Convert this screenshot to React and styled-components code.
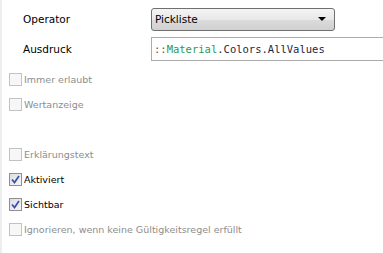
import React from 'react';
import styled, { createGlobalStyle } from 'styled-components';

const Global = createGlobalStyle`
  html, body { margin: 0; padding: 0; background: #fff; }
  body { font-family: "DejaVu Sans", Tahoma, sans-serif; font-size: 9.5px; }
`

const Panel = styled.div`
  width: 383px;
  height: 253px;
  box-sizing: border-box;
  border-left: 2px solid #eeeeee;
  overflow: hidden;
  display: flex;
  flex-direction: column;
  padding-top: 7px;
`

const FieldRow = styled.div`
  display: flex;
  align-items: center;
  height: 24px;
  margin-bottom: ${({gap}) => gap || 0}px;
`

const Label = styled.div`
  width: 128px;
  padding-left: 21px;
  color: #000;
  font-size: 10.5px;
`

const Select = styled.div`
  width: 184px;
  height: 23px;
  box-sizing: border-box;
  border: 1px solid #707070;
  border-radius: 3px;
  background: linear-gradient(#f4f4f4, #e8e8e8 50%, #dcdcdc 51%, #d0d0d0);
  display: flex;
  align-items: center;
  justify-content: space-between;
  padding: 0 8px 0 3px;
  font-size: 10.5px;
  color: #000;
`

const Arrow = styled.span`
  width: 0;
  height: 0;
  border-left: 4px solid transparent;
  border-right: 4px solid transparent;
  border-top: 4px solid #000;
`

const TextBox = styled.div`
  flex: 1;
  height: 24px;
  box-sizing: border-box;
  border: 1px solid #ababab;
  border-right: none;
  display: flex;
  align-items: center;
  padding-left: 2px;
  font-family: "DejaVu Sans Mono", "Liberation Mono", monospace;
  font-size: 10.5px;
  color: #1f1f3f;
  white-space: nowrap;
`

const Sep = styled.span` color: #4a5a6a; `
const Ident = styled.span` color: #2c9a50; `

const Checks = styled.div`
  display: flex;
  flex-direction: column;
  padding-left: 7px;
  margin-top: 6px;
`

const CheckRow = styled.div`
  display: flex;
  align-items: center;
  height: 25px;
  gap: 2px;
  color: ${({disabled}) => disabled ? '#8d8d8d' : '#000'};
`

const Box = styled.span`
  width: 13px;
  height: 13px;
  box-sizing: border-box;
  border: 1px solid ${({disabled}) => disabled ? '#c2c2c2' : '#8e8f8f'};
  background: ${({disabled}) => disabled ? '#f7f7f7' : 'linear-gradient(135deg, #dcdfe4, #f4f5f6)'};
  display: flex;
  align-items: center;
  justify-content: center;
`

const Spacer = styled.div` height: 25px; `

function Check({ label, checked, disabled }) {
  return (
    <CheckRow disabled={disabled}>
      <Box disabled={disabled}>
        {checked && (
          <svg width="9" height="9" viewBox="0 0 9 9">
            <path d="M1 4.5 L3.5 7.5 L8 1" fill="none" stroke="#3d50a0" strokeWidth="1.7" />
          </svg>
        )}
      </Box>
      <span>{label}</span>
    </CheckRow>
  )
}

export default function App() {
  return (
    <Panel>
      <Global />
      <FieldRow gap={6}>
        <Label>Operator</Label>
        <Select>
          <span>Pickliste</span>
          <Arrow />
        </Select>
      </FieldRow>
      <FieldRow>
        <Label>Ausdruck</Label>
        <TextBox>
          <Sep>::</Sep><Ident>Material</Ident>.Colors.AllValues
        </TextBox>
      </FieldRow>
      <Checks>
        <Check label="Immer erlaubt" disabled />
        <Check label="Wertanzeige" disabled />
        <Spacer />
        <Check label="Erklärungstext" disabled />
        <Check label="Aktiviert" checked />
        <Check label="Sichtbar" checked />
        <Check label="Ignorieren, wenn keine Gültigkeitsregel erfüllt" disabled />
      </Checks>
    </Panel>
  )
}
